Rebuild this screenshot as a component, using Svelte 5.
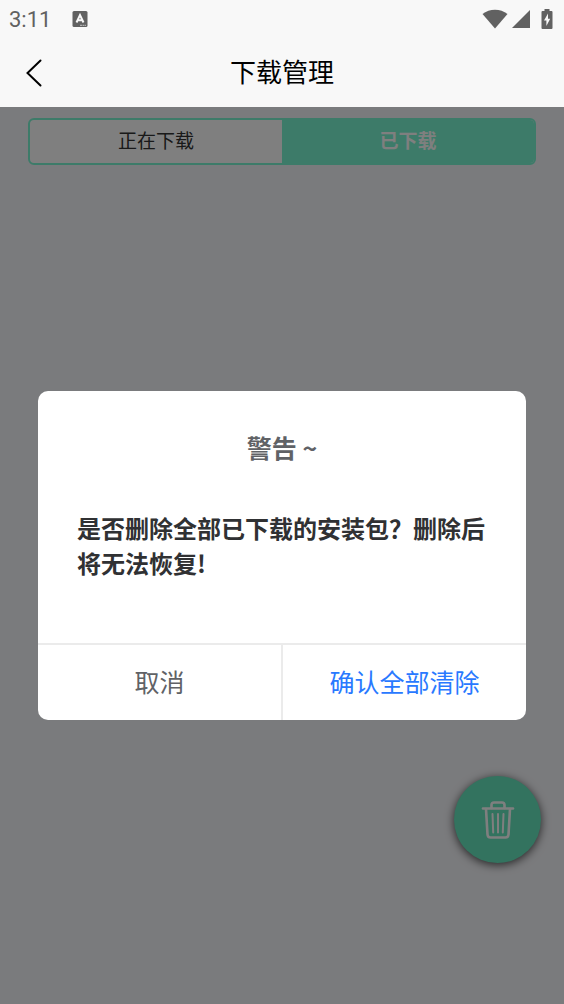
<script>
  let tabs = ['正在下载', '已下载'];
  let activeTab = '已下载';
  let showDialog = true;

  function openDialog() {
    showDialog = true;
  }

  function closeDialog() {
    showDialog = false;
  }
</script>

<div class="screen">
  <div class="status-bar">
    <span class="time">3:11</span>
    <svg class="keyboard" width="16" height="17" viewBox="0 0 16 17" aria-hidden="true">
      <rect x="0.5" y="0" width="15" height="16" rx="1.5" fill="#616161" />
      <path d="M4.5 11.5 L8 4 L11.5 11.5 M5.8 9.2 H10.2" fill="none" stroke="#f8f8f8" stroke-width="2" />
      <path d="M8 14.3 H14" stroke="#c4c4c4" stroke-width="1" stroke-dasharray="2 0.5" />
    </svg>
    <div class="indicators">
      <svg width="26" height="20" viewBox="0 0 26 20" aria-hidden="true">
        <path d="M0.5 5 C7.5 -0.8 18.5 -0.8 25.5 5 L13 19.5 Z" fill="#616161" />
      </svg>
      <svg width="18" height="18" viewBox="0 0 18 18" aria-hidden="true">
        <path d="M18 0 V18 H0 Z" fill="#616161" />
      </svg>
      <svg class="battery" width="12" height="20" viewBox="0 0 12 20" aria-hidden="true">
        <path d="M3.5 0 H8.5 V2 H10.5 Q11.5 2 11.5 3 V19 Q11.5 20 10.5 20 H1.5 Q0.5 20 0.5 19 V3 Q0.5 2 1.5 2 H3.5 Z" fill="#616161" />
        <path d="M7 4.5 L3 11.5 H5.4 V17 L9.2 9.8 H7 Z" fill="#f8f8f8" />
      </svg>
    </div>
  </div>

  <header class="nav-bar">
    <button class="back" aria-label="返回">
      <svg width="16" height="28" viewBox="0 0 16 28" aria-hidden="true">
        <path d="M14.5 1.5 L1.5 14 L14.5 26.5" fill="none" stroke="#000" stroke-width="2" stroke-linecap="round" />
      </svg>
    </button>
    <h1>下载管理</h1>
  </header>

  <main>
    <div class="tabs">
      {#each tabs as tab}
        <button class="tab" class:active={tab === activeTab} on:click={() => (activeTab = tab)}>
          {tab}
        </button>
      {/each}
    </div>

    <button class="clear-btn" aria-label="全部清除" on:click={openDialog}>
      <svg width="34" height="40" viewBox="0 0 34 40" fill="none" stroke="#fff" stroke-width="2.6" stroke-linecap="round" stroke-linejoin="round" aria-hidden="true">
        <path d="M2 8.5 H32" />
        <path d="M10.5 8 V5 Q10.5 2.5 13 2.5 H21 Q23.5 2.5 23.5 5 V8" />
        <path d="M5 9 L6.5 34.5 Q6.7 37.5 9.5 37.5 H24.5 Q27.3 37.5 27.5 34.5 L29 9" />
        <path d="M11.5 14 L12.2 32.5 M17 14 V32.5 M22.5 14 L21.8 32.5" stroke-width="2" />
      </svg>
    </button>

    {#if showDialog}
      <div class="overlay">
        <div class="dialog" role="alertdialog" aria-labelledby="dialog-title" aria-describedby="dialog-text">
          <h2 id="dialog-title">警告 ~</h2>
          <p id="dialog-text">是否删除全部已下载的安装包？删除后将无法恢复!</p>
          <div class="actions">
            <button on:click={closeDialog}>取消</button>
            <button class="confirm" on:click={closeDialog}>确认全部清除</button>
          </div>
        </div>
      </div>
    {/if}
  </main>
</div>

<style>
  :global(body) {
    margin: 0;
  }

  .screen {
    display: flex;
    flex-direction: column;
    min-height: 100vh;
    background: #f5f6fa;
    font-family: "Noto Sans CJK SC", sans-serif;
  }

  button {
    padding: 0;
    border: 0;
    background: none;
    font-family: inherit;
    cursor: pointer;
  }

  svg {
    display: block;
  }

  .status-bar {
    display: flex;
    align-items: center;
    height: 38px;
    padding: 0 11px 0 9px;
    background: #f8f8f8;
  }

  .time {
    color: #616161;
    font-family: Roboto, sans-serif;
    font-size: 22px;
    line-height: 38px;
    padding-top: 2px;
  }

  .keyboard {
    margin-left: 21px;
  }

  .indicators {
    display: flex;
    align-items: center;
    gap: 4px;
    margin-left: auto;
  }

  .battery {
    margin-left: 7px;
  }

  .nav-bar {
    display: grid;
    grid-template-columns: 68px 1fr 68px;
    align-items: center;
    height: 69px;
    background: #f8f8f8;
  }

  .back {
    display: flex;
    justify-content: center;
    height: 28px;
  }

  h1 {
    margin: 0;
    padding-bottom: 4px;
    color: #000;
    font-size: 26px;
    font-weight: 400;
    line-height: 38px;
    text-align: center;
  }

  main {
    position: relative;
    flex: 1;
  }

  .tabs {
    display: flex;
    margin: 11px 28px;
    overflow: hidden;
    border: 2px solid #7af6d2;
    border-radius: 6px;
    background: #fff;
  }

  .tab {
    flex: 1;
    height: 43px;
    padding-bottom: 4px;
    color: #333;
    font-size: 19px;
  }

  .tab.active {
    background: #7af6d2;
    color: #fff;
    font-weight: 700;
  }

  .clear-btn {
    position: absolute;
    right: 23px;
    bottom: 141px;
    display: flex;
    align-items: center;
    justify-content: center;
    width: 87px;
    height: 87px;
    border-radius: 50%;
    background: #66e6be;
    box-shadow: 0 2px 10px rgba(0, 0, 0, 0.7);
  }

  .overlay {
    position: absolute;
    inset: 0;
    display: flex;
    align-items: center;
    padding: 0 38px;
    background: rgba(0, 0, 0, 0.5);
  }

  .dialog {
    flex: 1;
    overflow: hidden;
    border-radius: 10px;
    background: #fff;
  }

  h2 {
    margin: 38px 39px 45px;
    color: #606266;
    font-size: 25px;
    font-weight: 700;
    line-height: 36px;
    text-align: center;
  }

  p {
    margin: 0 39px 63px;
    color: #303133;
    font-size: 24px;
    font-weight: 700;
    line-height: 35px;
  }

  .actions {
    display: flex;
    border-top: 2px solid #ebebeb;
  }

  .actions button {
    flex: 1;
    height: 75px;
    padding-bottom: 4px;
    color: #606266;
    font-size: 25px;
  }

  .actions .confirm {
    border-left: 2px solid #ebebeb;
    color: #2979ff;
  }
</style>
